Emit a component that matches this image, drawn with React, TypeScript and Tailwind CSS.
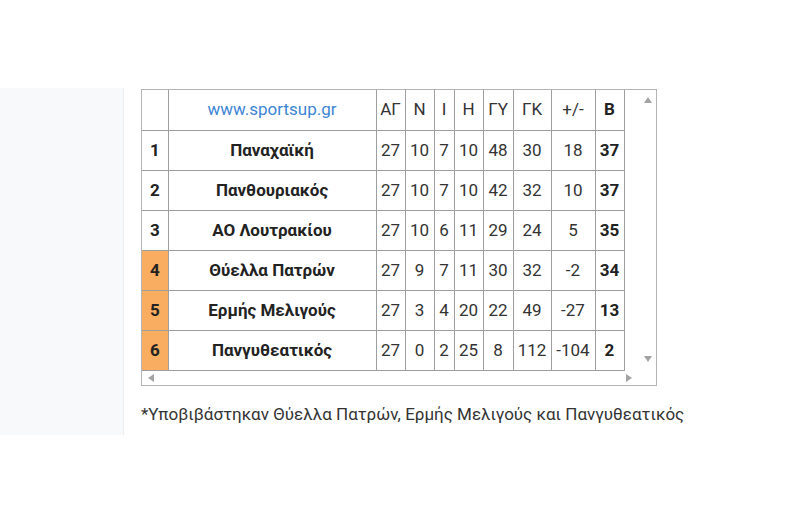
import React from "react";

type Row = {
  pos: number;
  team: string;
  stats: (string | number)[];
  pts: number;
  down?: boolean;
};

const rows: Row[] = [
  { pos: 1, team: "Παναχαϊκή", stats: [27, 10, 7, 10, 48, 30, 18], pts: 37 },
  { pos: 2, team: "Πανθουριακός", stats: [27, 10, 7, 10, 42, 32, 10], pts: 37 },
  { pos: 3, team: "ΑΟ Λουτρακίου", stats: [27, 10, 6, 11, 29, 24, 5], pts: 35 },
  { pos: 4, team: "Θύελλα Πατρών", stats: [27, 9, 7, 11, 30, 32, -2], pts: 34, down: true },
  { pos: 5, team: "Ερμής Μελιγούς", stats: [27, 3, 4, 20, 22, 49, -27], pts: 13, down: true },
  { pos: 6, team: "Πανγυθεατικός", stats: [27, 0, 2, 25, 8, 112, -104], pts: 2, down: true },
];

const statWidths = ["w-[29px]", "w-[29px]", "w-[20px]", "w-[29px]", "w-[30px]", "w-[38px]", "w-[44px]"];
const heads = ["ΑΓ", "Ν", "Ι", "Η", "ΓΥ", "ΓΚ", "+/-"];

const Arrow = ({ dir }: { dir: "up" | "down" | "left" | "right" }) => {
  const pts = {
    up: "0,6 4,0 8,6",
    down: "0,0 8,0 4,6",
    left: "6,0 6,8 0,4",
    right: "0,0 0,8 6,4",
  }[dir];
  const vert = dir === "up" || dir === "down";
  return (
    <svg width={vert ? 8 : 6} height={vert ? 6 : 8} viewBox={vert ? "0 0 8 6" : "0 0 6 8"}>
      <polygon points={pts} fill="#a3a3a3" />
    </svg>
  );
};

const App = () => {
  return (
    <div
      className="w-[800px] h-[525px] bg-white pt-[88px] text-[#333]"
      style={{ fontFamily: "Roboto, 'Noto Sans', sans-serif" }}
    >
      <div className="flex">
        <div className="w-[124px] h-[347px] bg-[#f8f9fa] border-r border-[#ececec] shrink-0" />
        <div className="pl-[17px] pt-px">
          <div className="w-[516px] h-[297px] border border-[#b4b4b4] flex flex-col">
            <div className="flex">
              <table className="table-fixed border-collapse text-[17px] leading-none">
                <thead>
                  <tr className="h-[40px]">
                    <th className="w-[26px] border-r border-b border-[#9e9e9e]" />
                    <th className="w-[208px] border border-t-0 border-[#9e9e9e] font-normal text-[#3d85d4]">
                      www.sportsup.gr
                    </th>
                    {heads.map((h, i) => (
                      <th key={h} className={`${statWidths[i]} border border-t-0 border-[#9e9e9e] font-normal`}>
                        {h}
                      </th>
                    ))}
                    <th className="w-[29px] border border-t-0 border-[#9e9e9e] font-bold text-[#222]">Β</th>
                  </tr>
                </thead>
                <tbody>
                  {rows.map((r) => (
                    <tr key={r.pos} className="h-[40px]">
                      <td
                        className={`border-r border-b border-[#9e9e9e] pl-[8px] font-bold text-[#222] ${
                          r.down ? "bg-[#f8ad60]" : ""
                        }`}
                      >
                        {r.pos}
                      </td>
                      <td className="border border-[#9e9e9e] text-center font-bold text-[#222]">{r.team}</td>
                      {r.stats.map((s, i) => (
                        <td key={i} className="border border-[#9e9e9e] text-center">
                          {s}
                        </td>
                      ))}
                      <td className="border border-[#9e9e9e] text-center font-bold text-[#222]">{r.pts}</td>
                    </tr>
                  ))}
                </tbody>
              </table>
              <div className="flex-1 flex flex-col justify-between items-end pr-[4px] pt-[7px] pb-[9px]">
                <Arrow dir="up" />
                <Arrow dir="down" />
              </div>
            </div>
            <div className="flex-1 flex items-center justify-between pl-[6px] pr-[24px]">
              <Arrow dir="left" />
              <Arrow dir="right" />
            </div>
          </div>
          <p className="mt-[17px] text-[17px] leading-[22px] text-[#333]">
            *Υποβιβάστηκαν Θύελλα Πατρών, Ερμής Μελιγούς και Πανγυθεατικός
          </p>
        </div>
      </div>
    </div>
  );
};

export default App;
